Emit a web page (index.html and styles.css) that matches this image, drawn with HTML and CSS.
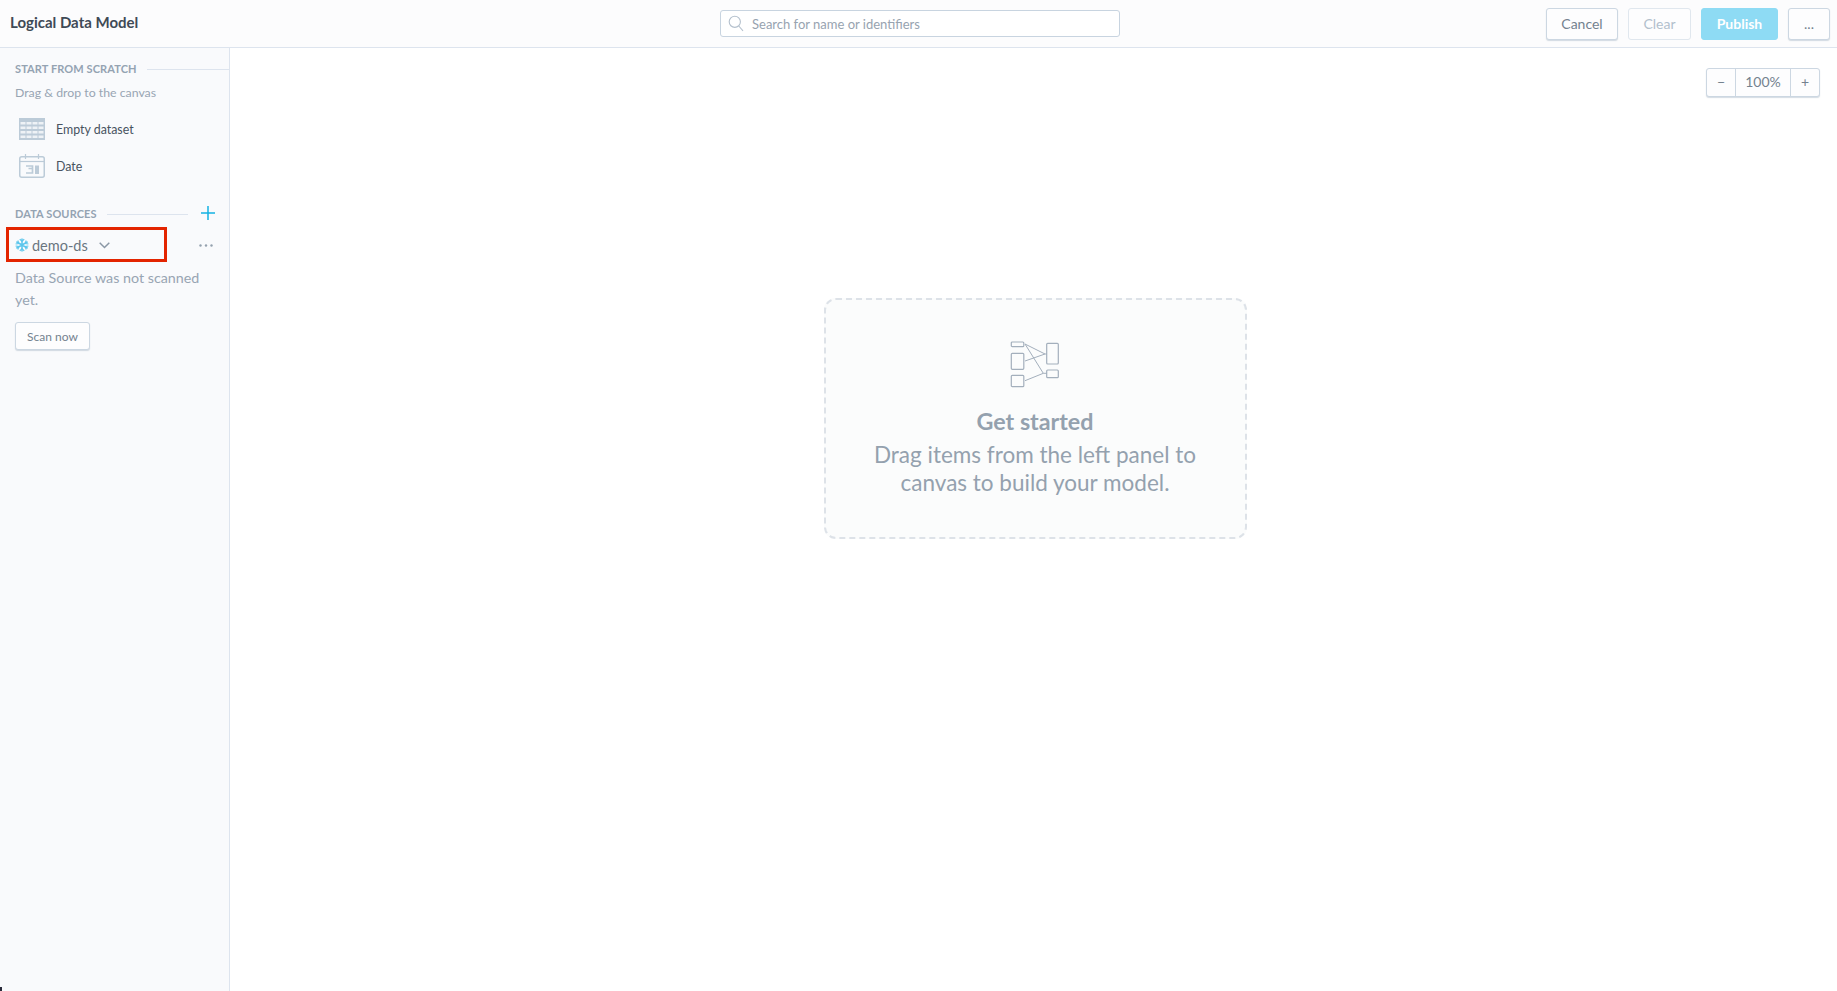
FILE: index.html
```html
<!DOCTYPE html>
<html lang="en">
<head>
    <meta charset="UTF-8">
    <title>Logical Data Model</title>
    <link rel="stylesheet" href="styles.css">
</head>
<body>
    <header class="topbar">
        <div class="title">Logical Data Model</div>
        <div class="search">
            <svg class="search-icon" width="16" height="17" viewBox="0 0 16 17" fill="none" stroke="#b4c0cd" stroke-width="1.1">
                <circle cx="6.8" cy="6.8" r="5.6"/>
                <path d="M10.8 11 15 15.8"/>
            </svg>
            <span>Search for name or identifiers</span>
        </div>
        <div class="actions">
            <button class="btn btn-cancel">Cancel</button>
            <button class="btn btn-clear">Clear</button>
            <button class="btn btn-publish">Publish</button>
            <button class="btn btn-more">...</button>
        </div>
    </header>

    <div class="main">
        <aside class="sidebar">
            <div class="section-head first">
                <span class="section-title">START FROM SCRATCH</span>
                <span class="section-line"></span>
            </div>
            <p class="hint">Drag &amp; drop to the canvas</p>

            <div class="item item-dataset">
                <svg width="26" height="22" viewBox="0 0 26 22" fill="none">
                    <rect width="26" height="22" fill="#bccbd8"/>
                    <g fill="#eef2f6">
                        <rect x="1.500" y="4" width="5" height="2.500"/><rect x="7.500" y="4" width="5" height="2.500"/><rect x="13.500" y="4" width="5" height="2.500"/><rect x="19.500" y="4" width="5" height="2.500"/>
                        <rect x="1.500" y="8.500" width="5" height="2.500"/><rect x="7.500" y="8.500" width="5" height="2.500"/><rect x="13.500" y="8.500" width="5" height="2.500"/><rect x="19.500" y="8.500" width="5" height="2.500"/>
                        <rect x="1.500" y="13" width="5" height="2.500"/><rect x="7.500" y="13" width="5" height="2.500"/><rect x="13.500" y="13" width="5" height="2.500"/><rect x="19.500" y="13" width="5" height="2.500"/>
                        <rect x="1.500" y="17.500" width="5" height="2.500"/><rect x="7.500" y="17.500" width="5" height="2.500"/><rect x="13.500" y="17.500" width="5" height="2.500"/><rect x="19.500" y="17.500" width="5" height="2.500"/>
                    </g>
                </svg>
                <span>Empty dataset</span>
            </div>
            <div class="item item-date">
                <svg width="26" height="24" viewBox="0 0 26 24" fill="none" stroke="#bccbd8">
                    <rect x="0.750" y="2.750" width="24.500" height="20.500" rx="2" stroke-width="1.500"/>
                    <path d="M1 7.500h24" stroke-width="1.200"/>
                    <path d="M6.500 0v5M19.500 0v5" stroke-width="1.200"/>
                    <path d="M7 12h6.500v2.500h-4h4v4.500h-6.500" stroke-width="1.700"/>
                    <path d="M16 11.500h4v8.500h-4z" fill="#bccbd8" stroke="none"/>
                </svg>
                <span>Date</span>
            </div>

            <div class="section-head sources">
                <span class="section-title">DATA SOURCES</span>
                <span class="section-line line-short"></span>
                <svg class="plus" width="14" height="14" viewBox="0 0 14 14" stroke="#14b2e2" stroke-width="1.500">
                    <path d="M7 0v14M0 7h14"/>
                </svg>
            </div>

            <div class="source-row">
                <svg width="14" height="14" viewBox="0 0 14 14" fill="none" stroke="#5cc6ec" stroke-width="1.500">
                    <path d="M7 0.500v13M1.400 3.750l11.200 6.500M12.600 3.750l-11.200 6.500"/>
                    <path d="M4.800 1.200 7 3.500 9.200 1.200M4.800 12.800l2.200-2.300 2.200 2.300M.6 6 3.500 5.500 3 2.500M13.400 6l-2.900-.5.5-3M.6 8l2.900.5-.5 3M13.400 8l-2.900.5.5 3" stroke-width="1.200"/>
                </svg>
                <span class="source-name">demo-ds</span>
                <svg class="chevron" width="11" height="7" viewBox="0 0 11 7" fill="none" stroke="#8a97a5" stroke-width="1.500">
                    <path d="M.7.8 5.500 5.500 10.300.8"/>
                </svg>
                <svg class="dots" width="14" height="3" viewBox="0 0 14 3" fill="#94a1ae">
                    <circle cx="1.500" cy="1.500" r="1.200"/><circle cx="7" cy="1.500" r="1.200"/><circle cx="12.500" cy="1.500" r="1.200"/>
                </svg>
            </div>
            <p class="scan-note">Data Source was not scanned yet.</p>
            <button class="btn btn-scan">Scan now</button>
        </aside>

        <section class="canvas">
            <div class="zoom">
                <span class="zoom-btn">&minus;</span>
                <span class="zoom-val">100%</span>
                <span class="zoom-btn">+</span>
            </div>
            <div class="empty-card">
                <svg class="empty-icon" width="50" height="47" viewBox="0 0 50 47" fill="none" stroke="#a3afbc" stroke-width="1.200">
                    <rect x="1.300" y="1" width="12.500" height="4.700" rx="1"/>
                    <rect x="1.300" y="12.300" width="12.500" height="16" rx="1"/>
                    <rect x="1.300" y="34.300" width="12.500" height="11.400" rx="1"/>
                    <rect x="36.700" y="2.300" width="11.600" height="20.700" rx="1"/>
                    <rect x="36.700" y="29" width="11.600" height="7.700" rx="1"/>
                    <path d="M15 3 35 13H37M15 3 33.300 32.300H37M15 20 35 13M15 39.700 33.300 32.300" stroke-width="1"/>
                </svg>
                <h2 class="empty-title">Get started</h2>
                <p class="empty-text">Drag items from the left panel to<br>canvas to build your model.</p>
            </div>
        </section>
    </div>

    <div class="highlight"></div>
    <div class="corner"></div>
</body>
</html>
```

FILE: styles.css
```css
/* page */
html, body {
    margin: 0;
    height: 100%;
    overflow: hidden;
}

body {
    font-family: Lato, "Open Sans", sans-serif;
    color: #74828f;
    background-color: #ffffff;
}

/* top bar */
.topbar {
    height: 47px;
    display: grid;
    grid-template-columns: 1fr 400px 1fr;
    align-items: center;
    padding: 0 7px 0 10px;
    background-color: #fcfcfd;
    border-bottom: 1px solid #dde4ee;
}

.title {
    font-size: 15px;
    font-weight: 700;
    color: #3f4a56;
    margin-top: -3px;
}

.search {
    height: 27px;
    display: flex;
    align-items: center;
    gap: 8px;
    padding-left: 7px;
    background-color: #ffffff;
    border: 1px solid #c8d4e0;
    border-radius: 3px;
    box-sizing: border-box;
    font-size: 13px;
    color: #97a3b0;
}

.actions {
    display: flex;
    justify-content: flex-end;
    gap: 10px;
}

/* buttons */
.btn {
    height: 32px;
    padding: 0;
    font-family: inherit;
    font-size: 14px;
    color: #74828f;
    background-color: #fdfdfe;
    border: 1px solid #ccd7e2;
    border-radius: 3px;
    box-shadow: 0 1px 1px rgba(170, 185, 200, 0.5);
}

.btn-cancel { width: 72px; }

.btn-clear {
    width: 63px;
    color: #b2c0cd;
    border-color: #e0e7ee;
    box-shadow: none;
}

.btn-publish {
    width: 77px;
    font-weight: 700;
    color: #ffffff;
    background-color: #8edbf4;
    border-color: #8edbf4;
    box-shadow: none;
}

.btn-more { width: 42px; }

/* layout */
.main {
    display: flex;
    height: 943px;
}

.sidebar {
    width: 230px;
    box-sizing: border-box;
    padding-top: 13px;
    background-color: #f9fafc;
    border-right: 1px solid #dde4ee;
    flex-shrink: 0;
}

.section-head {
    display: flex;
    align-items: center;
    padding-left: 15px;
    height: 14px;
}

.section-title {
    font-size: 11px;
    font-weight: 700;
    letter-spacing: 0.1px;
    color: #94a3b2;
    white-space: nowrap;
}

.section-line {
    flex: 1;
    height: 1px;
    margin-left: 10px;
    margin-top: 2px;
    background-color: #dde4ee;
}

.line-short {
    flex: none;
    width: 81px;
}

.plus {
    margin-left: 13px;
}

.hint {
    margin: 10px 0 0 15px;
    font-size: 12.300px;
    line-height: 16px;
    color: #98a5b3;
}

.item {
    display: flex;
    align-items: center;
    gap: 11px;
    padding-left: 19px;
    font-size: 12.400px;
    color: #48535f;
}

.item-dataset {
    margin-top: 17px;
    height: 22px;
}

.item-date {
    margin-top: 14px;
    height: 24px;
}

.sources {
    margin-top: 28px;
}

.source-row {
    display: flex;
    align-items: center;
    height: 20px;
    margin-top: 15px;
    padding-left: 15px;
}

.source-name {
    margin-left: 3px;
    font-size: 14.500px;
    color: #69757f;
}

.chevron {
    margin-left: 11px;
}

.dots {
    margin-left: 89px;
}

.scan-note {
    margin: 12px 20px 0 15px;
    font-size: 14.300px;
    line-height: 22px;
    color: #98a5b3;
}

.btn-scan {
    display: block;
    width: 75px;
    height: 28px;
    margin: 11px 0 0 15px;
    font-size: 12px;
}

/* canvas */
.canvas {
    flex: 1;
    position: relative;
    display: flex;
    justify-content: center;
    align-items: flex-start;
    padding-top: 250px;
    padding-left: 3px;
}

.zoom {
    position: absolute;
    top: 20px;
    right: 17px;
    display: flex;
    height: 29px;
    box-sizing: border-box;
    font-size: 14px;
    color: #74828f;
    background-color: #fdfdfe;
    border: 1px solid #ccd7e2;
    border-radius: 3px;
    box-shadow: 0 1px 1px rgba(170, 185, 200, 0.5);
}

.zoom-btn, .zoom-val {
    display: flex;
    align-items: center;
    justify-content: center;
    width: 28px;
    padding-bottom: 2px;
}

.zoom-val {
    width: 54px;
    border-left: 1px solid #ccd7e2;
    border-right: 1px solid #ccd7e2;
}

.empty-card {
    width: 423px;
    height: 241px;
    box-sizing: border-box;
    padding-top: 41px;
    text-align: center;
    background-color: #fbfcfc;
    border: 2px dashed #dde2e8;
    border-radius: 12px;
}

.empty-icon {
    display: block;
    margin: 0 auto;
}

.empty-title {
    margin: 19px 0 0;
    font-size: 23.300px;
    line-height: 28px;
    font-weight: 700;
    color: #94a1ae;
}

.empty-text {
    margin: 6px 0 0;
    font-size: 22.500px;
    line-height: 28px;
    color: #94a1ae;
}

/* annotation over the screenshot */
.highlight {
    position: absolute;
    left: 6px;
    top: 227px;
    width: 161px;
    height: 35px;
    box-sizing: border-box;
    border: 3px solid #e32400;
}

.corner {
    position: absolute;
    left: 0;
    bottom: 0;
    width: 2px;
    height: 4px;
    background-color: #2a2a3a;
}
```
